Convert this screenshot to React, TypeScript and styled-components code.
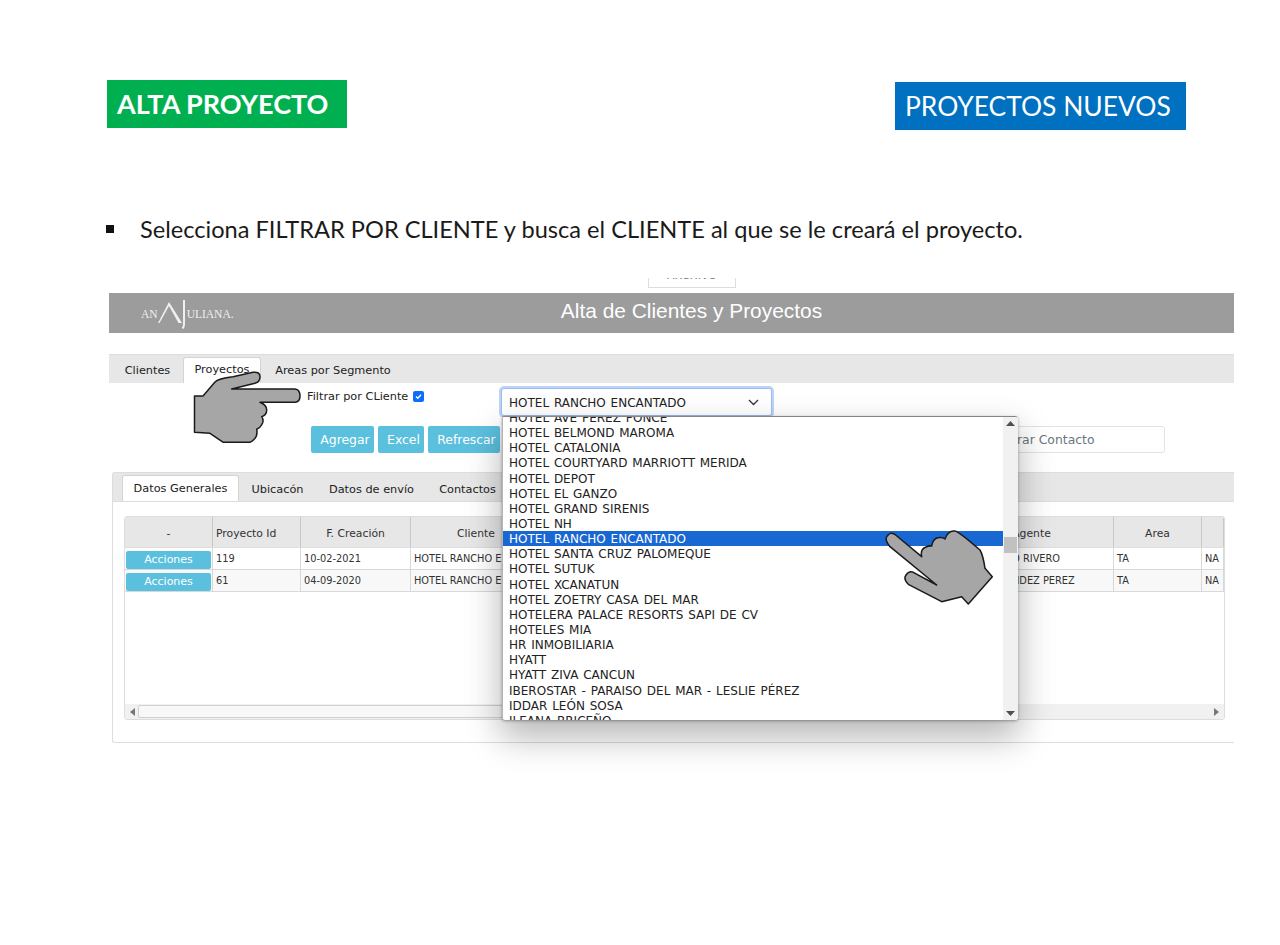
import React from "react";
import styled, { createGlobalStyle } from "styled-components";

const GlobalStyle = createGlobalStyle`
    html, body {
        margin: 0;
        padding: 0;
        background: #ffffff;
    }
`;

const appFont = `Tahoma, "DejaVu Sans", Verdana, sans-serif`;
const slideFont = `Lato, "Open Sans", sans-serif`;

const Slide = styled.div`
    width: 1280px;
    height: 945px;
    position: relative;
    overflow: hidden;
    background: #ffffff;
    font-family: ${slideFont};
`;

const TitleRow = styled.div`
    display: flex;
    justify-content: space-between;
    padding: 80px 94px 0 107px;
`;

const GreenTitle = styled.div`
    width: 240px;
    height: 48px;
    box-sizing: border-box;
    padding-left: 10px;
    background: #00b050;
    color: #ffffff;
    font-size: 27px;
    font-weight: 700;
    line-height: 48px;
    white-space: nowrap;
`;

const BlueTitle = styled.div`
    width: 291px;
    height: 48px;
    box-sizing: border-box;
    margin-top: 2px;
    padding-left: 10px;
    background: #0070c0;
    color: #ffffff;
    font-size: 26.4px;
    line-height: 48px;
    white-space: nowrap;
`;

const BulletRow = styled.div`
    display: flex;
    align-items: center;
    margin-top: 83px;
    padding-left: 106px;
    height: 32px;
    color: #1a1a1a;
    font-size: 23.6px;
    white-space: nowrap;
`;

const Bullet = styled.span`
    width: 8px;
    height: 8px;
    margin-right: 26px;
    background: #111111;
`;

const StubRow = styled.div`
    display: flex;
    justify-content: center;
    margin-top: 33px;
    padding-left: 104px;
    height: 10px;
`;

const FileStub = styled.div`
    width: 88px;
    height: 10px;
    box-sizing: border-box;
    border: 1px solid #dddddd;
    border-top: none;
    overflow: hidden;
    color: #777777;
    font-family: ${appFont};
    font-size: 11px;
    line-height: 0;
    text-align: center;
`;

const StubLabel = styled.div`
    margin-top: -2px;
`;

const AppShot = styled.div`
    position: relative;
    width: 1125px;
    margin: 5px 0 0 109px;
    font-family: ${appFont};
    color: #333333;
    font-size: 11.3px;
`;

const Banner = styled.div`
    position: relative;
    height: 40px;
    display: flex;
    align-items: center;
    justify-content: center;
    background: #9c9c9c;
    color: #ffffff;
    font-family: "Liberation Sans", Arial, sans-serif;
    font-size: 20.9px;
    padding-bottom: 4px;
    box-sizing: border-box;
    padding-left: 40px;
`;

const Logo = styled.div`
    position: absolute;
    left: 32px;
    top: 6px;
    display: flex;
    align-items: center;
    height: 30px;
    color: #f0f0f0;
    font-family: "Liberation Serif", serif;
    font-size: 11.5px;
`;

const Tab = styled.div<{ $active?: boolean; $w: number }>`
    width: ${(p) => p.$w}px;
    height: ${(p) => (p.$active ? "26px" : "25px")};
    box-sizing: border-box;
    display: flex;
    align-items: center;
    justify-content: center;
    color: #222222;
    white-space: nowrap;
    background: ${(p) => (p.$active ? "#ffffff" : "transparent")};
    border: 1px solid ${(p) => (p.$active ? "#d4d4d4" : "transparent")};
    border-bottom: none;
    border-radius: 3px 3px 0 0;
`;

const TopTabs = styled.div`
    display: flex;
    align-items: flex-end;
    height: 29px;
    margin-top: 21px;
    padding-left: 3px;
    box-sizing: border-box;
    background: #e7e7e7;
    border-top: 1px solid #dcdcdc;

    ${Tab} {
        padding-bottom: 2px;
    }
`;

const FilterArea = styled.div`
    display: grid;
    grid-template-columns: 392px 1fr;
    height: 89px;
`;

const FilterLeft = styled.div`
    display: flex;
    flex-direction: column;
    align-items: flex-start;
    padding: 6px 0 0 198px;
`;

const CheckLabel = styled.div`
    display: flex;
    align-items: center;
    gap: 5px;
    height: 15px;
    color: #222222;
    white-space: nowrap;
`;

const CheckBox = styled.span`
    width: 11px;
    height: 11px;
    border-radius: 2px;
    background: #0d6efd;
    display: flex;
    align-items: center;
    justify-content: center;
`;

const ButtonRow = styled.div`
    display: flex;
    gap: 4px;
    margin-top: 22px;
    margin-left: 4px;
`;

const ActionButton = styled.div<{ $w: number }>`
    width: ${(p) => p.$w}px;
    height: 27px;
    box-sizing: border-box;
    padding-left: 5px;
    display: flex;
    align-items: center;
    justify-content: center;
    border-radius: 2px;
    background: #5bc0de;
    color: #ffffff;
    font-size: 12.4px;
`;

const FilterRight = styled.div`
    display: flex;
    flex-direction: column;
    padding-top: 5px;
`;

const SelectBox = styled.div`
    width: 271px;
    height: 28px;
    box-sizing: border-box;
    display: flex;
    align-items: center;
    justify-content: space-between;
    padding: 1px 12px 0 7px;
    background: #ffffff;
    border-radius: 3px;
    box-shadow: 0 0 0 2px #bcd4f8;
    border: 1px solid #9dbcf0;
    color: #222222;
    font-size: 12px;
    word-spacing: 1px;
    white-space: nowrap;
`;

const ContactInput = styled.div`
    align-self: flex-end;
    width: 180px;
    height: 27px;
    margin: 10px 69px 0 0;
    box-sizing: border-box;
    padding-left: 13px;
    border: 1px solid #e0e4e8;
    border-radius: 3px;
    color: #6c757d;
    font-size: 12.4px;
    line-height: 26px;
    white-space: nowrap;
`;

const DetailCard = styled.div`
    height: 271px;
    box-sizing: border-box;
    margin-left: 3px;
    border: 1px solid #dddddd;
    border-right: none;
    border-radius: 3px 0 0 3px;
`;

const DetailTabs = styled.div`
    display: flex;
    align-items: flex-end;
    height: 29px;
    padding-left: 9px;
    box-sizing: border-box;
    background: #e7e7e7;
    border-bottom: 1px solid #dddddd;
`;

const TableFrame = styled.div`
    position: relative;
    height: 204px;
    box-sizing: border-box;
    margin: 14px 9px 0 11px;
    border: 1px solid #dddddd;
    border-radius: 3px;
    background: #ffffff;
    overflow: hidden;
`;

const columns = "88px 88px 110px 539px 164px 88px 1fr";

const HeaderRow = styled.div`
    display: grid;
    grid-template-columns: ${columns};
    height: 31px;
    background: #e7e7e7;
    border-bottom: 1px solid #dddddd;
    box-sizing: border-box;
`;

const HeaderCell = styled.div<{ $left?: boolean; $pad?: number }>`
    display: flex;
    align-items: center;
    justify-content: ${(p) => (p.$left ? "flex-start" : "center")};
    padding-left: ${(p) => p.$pad ?? 0}px;
    padding-top: 2px;
    border-right: 1px solid #c8c8c8;
    color: #333333;
    font-size: 10.8px;
    white-space: nowrap;
`;

const BodyRow = styled.div<{ $alt?: boolean }>`
    display: grid;
    grid-template-columns: ${columns};
    height: 22px;
    box-sizing: border-box;
    background: ${(p) => (p.$alt ? "#f8f8f8" : "#ffffff")};
    border-bottom: 1px solid #d8d8d8;
`;

const BodyCell = styled.div<{ $pad?: number }>`
    display: flex;
    align-items: center;
    padding-left: ${(p) => p.$pad ?? 3}px;
    border-right: 1px solid #d8d8d8;
    color: #333333;
    font-size: 9.8px;
    white-space: nowrap;
    overflow: hidden;
`;

const RowButton = styled.div`
    width: 85px;
    height: 18px;
    margin: 2px 0 0 1px;
    display: flex;
    align-items: center;
    justify-content: center;
    border-radius: 2px;
    background: #5bc0de;
    color: #ffffff;
    font-size: 11px;
`;

const HScrollBar = styled.div`
    position: absolute;
    left: 0;
    right: 0;
    bottom: 0;
    height: 15px;
    display: flex;
    align-items: center;
    justify-content: space-between;
    padding: 0 5px;
    background: #f1f1f1;
`;

const HScrollThumb = styled.div`
    position: absolute;
    left: 13px;
    right: 300px;
    top: 1px;
    height: 11px;
    background: #f8f8f8;
    border: 1px solid #d0d0d0;
    border-radius: 2px;
`;

const Dropdown = styled.div`
    position: absolute;
    left: 393px;
    top: 123px;
    width: 516px;
    height: 304px;
    display: flex;
    background: #ffffff;
    border-top: 1px solid #858585;
    border-left: 1px solid #b4b4b4;
    border-radius: 0 3px 3px 3px;
    box-sizing: border-box;
    overflow: hidden;
`;

const DropdownShadow = styled.div`
    position: absolute;
    left: 393px;
    top: 123px;
    width: 516px;
    height: 304px;
    border-radius: 3px;
    box-shadow: 0 16px 34px 2px rgba(0, 0, 0, 0.28), 0 1px 3px rgba(0, 0, 0, 0.35);
`;

const OptionList = styled.div`
    flex: 1;
    margin-top: -7px;
    min-width: 0;
`;

const Option = styled.div<{ $selected?: boolean }>`
    height: 15.15px;
    line-height: 17px;
    padding-left: 6px;
    color: ${(p) => (p.$selected ? "#ffffff" : "#222222")};
    background: ${(p) => (p.$selected ? "#1967d2" : "transparent")};
    font-size: 12px;
    word-spacing: 1px;
    white-space: nowrap;
`;

const VScrollBar = styled.div`
    position: relative;
    flex: 0 0 15px;
    background: #f1f1f1;
`;

const VScrollThumb = styled.div`
    position: absolute;
    left: 1px;
    right: 1px;
    top: 120px;
    height: 16px;
    background: #c1c1c1;
`;

const ArrowGlyph = styled.svg<{ $at: "top" | "bottom" }>`
    position: absolute;
    left: 3px;
    ${(p) => (p.$at === "top" ? "top: 4px;" : "bottom: 4px;")}
`;

const HandSvg = styled.svg<{ $x: number; $y: number }>`
    position: absolute;
    left: ${(p) => p.$x}px;
    top: ${(p) => p.$y}px;
`;

const options = [
    "HOTEL AVE PEREZ PONCE",
    "HOTEL BELMOND MAROMA",
    "HOTEL CATALONIA",
    "HOTEL COURTYARD MARRIOTT MERIDA",
    "HOTEL DEPOT",
    "HOTEL EL GANZO",
    "HOTEL GRAND SIRENIS",
    "HOTEL NH",
    "HOTEL RANCHO ENCANTADO",
    "HOTEL SANTA CRUZ PALOMEQUE",
    "HOTEL SUTUK",
    "HOTEL XCANATUN",
    "HOTEL ZOETRY CASA DEL MAR",
    "HOTELERA PALACE RESORTS SAPI DE CV",
    "HOTELES MIA",
    "HR INMOBILIARIA",
    "HYATT",
    "HYATT ZIVA CANCUN",
    "IBEROSTAR - PARAISO DEL MAR - LESLIE PÉREZ",
    "IDDAR LEÓN SOSA",
    "ILEANA BRICEÑO",
];

const rows = [
    { id: "119", date: "10-02-2021", agent: "LUIS ARTURO RIVERO", area: "TA" },
    { id: "61", date: "04-09-2020", agent: "LUIS FERNANDEZ PEREZ", area: "TA" },
];

function PointRightHand() {
    return (
        <HandSvg $x={81} $y={75} width={114} height={78} viewBox="0 0 114 78">
            <path
                d="M4.5 28 H13 L25 14 Q28 10.5 43 8.7 L63 4.3 Q70 3.5 70 8.7 Q70 14 65 15.3 L41.7 21 H105 Q110 21.5 110 28 Q110 34 105 34.3 H70 Q76.7 37 76.7 42 Q76.7 47 71.7 48.7 Q74.5 53 71.5 57 Q70 60 66.7 61.3 Q68.5 70 60 74.3 H33.3 L20 65.3 L4.5 64.3 Z"
                fill="#a6a6a6"
                stroke="#1a1a1a"
                strokeWidth="1.5"
                strokeLinejoin="round"
            />
        </HandSvg>
    );
}

function PointLeftHand() {
    return (
        <HandSvg $x={775} $y={234} width={112} height={80} viewBox="0 0 112 80">
            <path
                d="M6 19.7 Q0 12 3.3 9 Q6 4.5 11 7.5 L37.7 29.7 Q36 22 42 20 Q45 18.5 47.7 19 Q49 11 55 10.5 Q59 10 61 12 Q64 3 71 4 Q74 4 96 23 Q99 28 101 41.3 L108.3 49.7 L84.3 77 L77.7 69.7 L57.7 74.7 L24.3 57.3 Q19 52 22 48 Q25 43.5 29.3 45.3 L52.7 58 Z"
                fill="#a6a6a6"
                stroke="#1a1a1a"
                strokeWidth="1.5"
                strokeLinejoin="round"
            />
        </HandSvg>
    );
}

function App() {
    return (
        <Slide>
            <GlobalStyle />
            <TitleRow>
                <GreenTitle>ALTA PROYECTO</GreenTitle>
                <BlueTitle>PROYECTOS NUEVOS</BlueTitle>
            </TitleRow>
            <BulletRow>
                <Bullet />
                Selecciona FILTRAR POR CLIENTE y busca el CLIENTE al que se le creará el proyecto.
            </BulletRow>
            <StubRow>
                <FileStub>
                    <StubLabel>ARCHIVO</StubLabel>
                </FileStub>
            </StubRow>
            <AppShot>
                <Banner>
                    <Logo>
                        AN
                        <svg width="29" height="30" viewBox="0 0 29 30">
                            <path d="M0 24 L11 3 L24 24 L20.5 24 L11 7 L1.5 24 Z" fill="#f0f0f0" />
                            <path d="M26 1 V25 Q26 28 24.5 29.5" fill="none" stroke="#f0f0f0" strokeWidth="2" />
                        </svg>
                        ULIANA.
                    </Logo>
                    Alta de Clientes y Proyectos
                </Banner>
                <TopTabs>
                    <Tab $w={71}>Clientes</Tab>
                    <Tab $w={78} $active>
                        Proyectos
                    </Tab>
                    <Tab $w={144}>Areas por Segmento</Tab>
                </TopTabs>
                <FilterArea>
                    <FilterLeft>
                        <CheckLabel>
                            Filtrar por CLiente
                            <CheckBox>
                                <svg width="9" height="9" viewBox="0 0 9 9">
                                    <path d="M2 4.6 L3.8 6.3 L7 2.8" fill="none" stroke="#fff" strokeWidth="1.4" />
                                </svg>
                            </CheckBox>
                        </CheckLabel>
                        <ButtonRow>
                            <ActionButton $w={63}>Agregar</ActionButton>
                            <ActionButton $w={46}>Excel</ActionButton>
                            <ActionButton $w={72}>Refrescar</ActionButton>
                        </ButtonRow>
                    </FilterLeft>
                    <FilterRight>
                        <SelectBox>
                            HOTEL RANCHO ENCANTADO
                            <svg width="11" height="7" viewBox="0 0 11 7">
                                <path d="M1 1 L5.5 5.5 L10 1" fill="none" stroke="#333" strokeWidth="1.3" />
                            </svg>
                        </SelectBox>
                        <ContactInput>Filtrar Contacto</ContactInput>
                    </FilterRight>
                </FilterArea>
                <DetailCard>
                    <DetailTabs>
                        <Tab $w={117} $active>
                            Datos Generales
                        </Tab>
                        <Tab $w={77}>Ubicacón</Tab>
                        <Tab $w={111}>Datos de envío</Tab>
                        <Tab $w={81}>Contactos</Tab>
                    </DetailTabs>
                    <TableFrame>
                        <HeaderRow>
                            <HeaderCell>-</HeaderCell>
                            <HeaderCell $left $pad={3}>
                                Proyecto Id
                            </HeaderCell>
                            <HeaderCell>F. Creación</HeaderCell>
                            <HeaderCell $left $pad={46}>
                                Cliente
                            </HeaderCell>
                            <HeaderCell>Agente</HeaderCell>
                            <HeaderCell>Area</HeaderCell>
                            <HeaderCell />
                        </HeaderRow>
                        {rows.map((row, i) => (
                            <BodyRow key={row.id} $alt={i === 1}>
                                <BodyCell $pad={0}>
                                    <RowButton>Acciones</RowButton>
                                </BodyCell>
                                <BodyCell>{row.id}</BodyCell>
                                <BodyCell>{row.date}</BodyCell>
                                <BodyCell>HOTEL RANCHO ENCANTADO</BodyCell>
                                <BodyCell $pad={5}>{row.agent}</BodyCell>
                                <BodyCell>{row.area}</BodyCell>
                                <BodyCell>NA</BodyCell>
                            </BodyRow>
                        ))}
                        <HScrollBar>
                            <HScrollThumb />
                            <svg width="5" height="8" viewBox="0 0 5 8">
                                <path d="M5 0 V8 L0 4 Z" fill="#777" />
                            </svg>
                            <svg width="5" height="8" viewBox="0 0 5 8">
                                <path d="M0 0 V8 L5 4 Z" fill="#777" />
                            </svg>
                        </HScrollBar>
                    </TableFrame>
                </DetailCard>
                <DropdownShadow />
                <Dropdown>
                    <OptionList>
                        {options.map((name) => (
                            <Option key={name} $selected={name === "HOTEL RANCHO ENCANTADO"}>
                                {name}
                            </Option>
                        ))}
                    </OptionList>
                    <VScrollBar>
                        <ArrowGlyph $at="top" width="9" height="5" viewBox="0 0 9 5">
                            <path d="M0 5 H9 L4.5 0 Z" fill="#505050" />
                        </ArrowGlyph>
                        <VScrollThumb />
                        <ArrowGlyph $at="bottom" width="9" height="5" viewBox="0 0 9 5">
                            <path d="M0 0 H9 L4.5 5 Z" fill="#505050" />
                        </ArrowGlyph>
                    </VScrollBar>
                </Dropdown>
                <PointRightHand />
                <PointLeftHand />
            </AppShot>
        </Slide>
    );
}

export default App;
